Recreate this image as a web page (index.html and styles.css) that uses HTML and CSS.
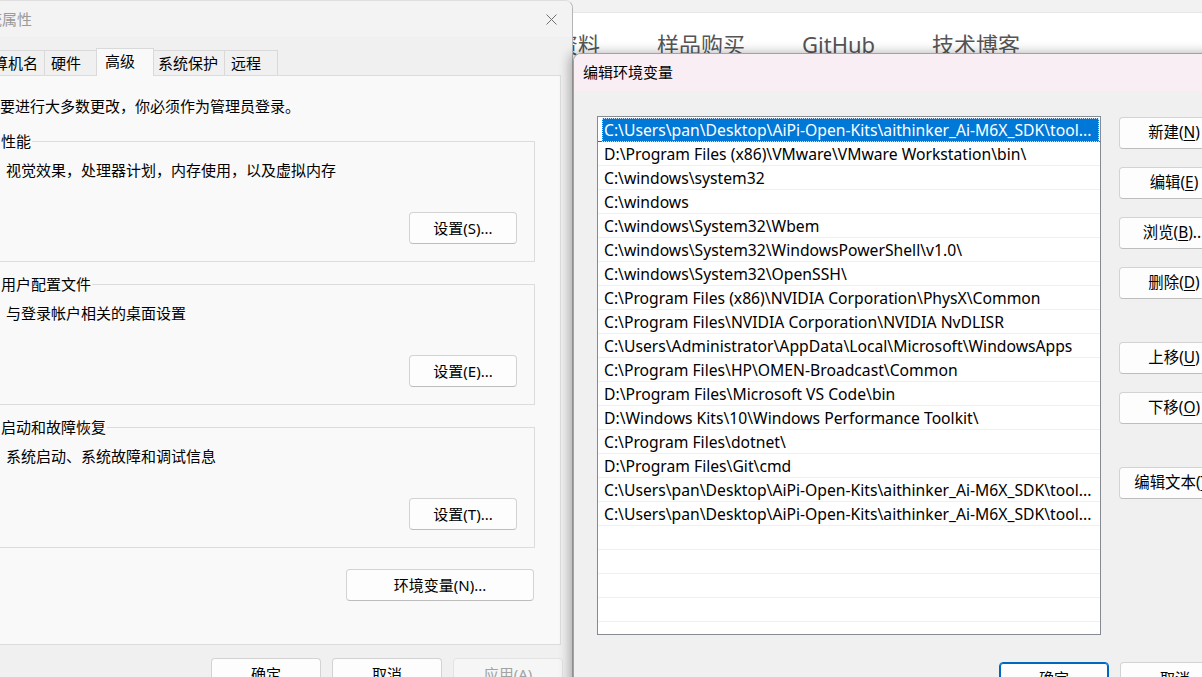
FILE: index.html
```html
<!DOCTYPE html>
<html lang="zh-CN">
  <head>
    <meta charset="UTF-8" />
    <title>编辑环境变量</title>
    <link rel="stylesheet" href="styles.css">
  </head>
  <body>
    <div class="site">
      <div class="site-top"></div>
      <nav class="site-nav">
        <span>资料</span>
        <span>样品购买</span>
        <span>GitHub</span>
        <span>技术博客</span>
      </nav>
    </div>

    <!-- 系统属性 -->
    <div class="window sysprop">
      <div class="titlebar">
        <span class="title">系统属性</span>
        <span class="close">
          <svg width="11" height="11" viewBox="0 0 11 11">
            <path d="M0.5 0.5 L10.5 10.5 M10.5 0.5 L0.5 10.5" stroke="#707070" stroke-width="1" fill="none" />
          </svg>
        </span>
      </div>
      <div class="win-body">
        <div class="tabs">
          <span class="tab">计算机名</span>
          <span class="tab">硬件</span>
          <span class="tab active">高级</span>
          <span class="tab">系统保护</span>
          <span class="tab">远程</span>
        </div>
        <div class="tab-panel">
          <p class="note">要进行大多数更改，你必须作为管理员登录。</p>

          <fieldset class="group">
            <legend>性能</legend>
            <div class="group-body">
              <p class="desc">视觉效果，处理器计划，内存使用，以及虚拟内存</p>
              <button class="btn btn-set">设置(S)...</button>
            </div>
          </fieldset>

          <fieldset class="group">
            <legend>用户配置文件</legend>
            <div class="group-body">
              <p class="desc">与登录帐户相关的桌面设置</p>
              <button class="btn btn-set">设置(E)...</button>
            </div>
          </fieldset>

          <fieldset class="group">
            <legend>启动和故障恢复</legend>
            <div class="group-body">
              <p class="desc">系统启动、系统故障和调试信息</p>
              <button class="btn btn-set">设置(T)...</button>
            </div>
          </fieldset>

          <button class="btn btn-env">环境变量(N)...</button>
        </div>
        <div class="dialog-buttons">
          <button class="btn">确定</button>
          <button class="btn">取消</button>
          <button class="btn disabled">应用(A)</button>
        </div>
      </div>
    </div>

    <!-- 编辑环境变量 -->
    <div class="window envedit">
      <div class="titlebar active-title">
        <span class="title">编辑环境变量</span>
      </div>
      <div class="env-body">
        <div class="env-main">
          <ul class="path-list">
            <li class="selected"><span>C:\Users\pan\Desktop\AiPi-Open-Kits\aithinker_Ai-M6X_SDK\tool...</span></li>
            <li><span>D:\Program Files (x86)\VMware\VMware Workstation\bin\</span></li>
            <li><span>C:\windows\system32</span></li>
            <li><span>C:\windows</span></li>
            <li><span>C:\windows\System32\Wbem</span></li>
            <li><span>C:\windows\System32\WindowsPowerShell\v1.0\</span></li>
            <li><span>C:\windows\System32\OpenSSH\</span></li>
            <li><span>C:\Program Files (x86)\NVIDIA Corporation\PhysX\Common</span></li>
            <li><span>C:\Program Files\NVIDIA Corporation\NVIDIA NvDLISR</span></li>
            <li><span>C:\Users\Administrator\AppData\Local\Microsoft\WindowsApps</span></li>
            <li><span>C:\Program Files\HP\OMEN-Broadcast\Common</span></li>
            <li><span>D:\Program Files\Microsoft VS Code\bin</span></li>
            <li><span>D:\Windows Kits\10\Windows Performance Toolkit\</span></li>
            <li><span>C:\Program Files\dotnet\</span></li>
            <li><span>D:\Program Files\Git\cmd</span></li>
            <li><span>C:\Users\pan\Desktop\AiPi-Open-Kits\aithinker_Ai-M6X_SDK\tool...</span></li>
            <li><span>C:\Users\pan\Desktop\AiPi-Open-Kits\aithinker_Ai-M6X_SDK\tool...</span></li>
            <li><span></span></li>
            <li><span></span></li>
            <li><span></span></li>
            <li><span></span></li>
            <li><span></span></li>
          </ul>
          <div class="side-buttons">
            <button class="btn">新建(<u>N</u>)</button>
            <button class="btn">编辑(<u>E</u>)</button>
            <button class="btn">浏览(<u>B</u>)...</button>
            <button class="btn">删除(<u>D</u>)</button>
            <button class="btn spaced">上移(<u>U</u>)</button>
            <button class="btn">下移(<u>O</u>)</button>
            <button class="btn spaced">编辑文本(<u>T</u>)</button>
          </div>
        </div>
        <div class="dialog-buttons env-buttons">
          <button class="btn default">确定</button>
          <button class="btn">取消</button>
        </div>
      </div>
    </div>
  </body>
</html>
```

FILE: styles.css
```css
* {
  margin: 0;
  padding: 0;
  box-sizing: border-box;
}

body {
  position: relative;
  width: 1202px;
  height: 677px;
  overflow: hidden;
  background: #fff;
  color: #000;
  font-family: "Noto Sans", "Noto Sans CJK SC", sans-serif;
  font-size: 15px;
  line-height: 20px;
}

/* page behind the dialogs */
.site-top {
  height: 13px;
  background: #f2f2f2;
  border-bottom: 1px solid #e6e6e6;
}

.site-nav {
  display: flex;
  gap: 57px;
  padding: 16px 0 0 556px;
  font-size: 22px;
  line-height: 30px;
  color: #555;
}

/* windows */
.window {
  position: absolute;
  background: #f0f0f0;
  overflow: hidden;
}

.titlebar {
  display: flex;
  align-items: center;
  justify-content: space-between;
}

.sysprop {
  left: -40px;
  top: 0;
  width: 613px;
  height: 700px;
  border-radius: 0 8px 0 0;
  border-right: 1px solid #b5b5b5;
  border-top: 1px solid #dedede;
}

.sysprop .titlebar {
  height: 36px;
  padding-left: 12px;
  background: #f3f3f3;
}

.sysprop .title {
  color: #9a9a9a;
}

.close {
  display: flex;
  align-items: center;
  justify-content: center;
  width: 42px;
  height: 36px;
}

.win-body {
  padding: 11px 11px 0;
}

.tabs {
  display: flex;
  align-items: flex-end;
  height: 27px;
}

.tab {
  position: relative;
  min-width: 54px;
  height: 25px;
  padding: 0 6px;
  line-height: 25px;
  border: 1px solid #d9d9d9;
  border-right: none;
  border-bottom: none;
  background: #f0f0f0;
  white-space: nowrap;
}

.tab:last-child {
  border-right: 1px solid #d9d9d9;
}

.tab.active {
  z-index: 1;
  min-width: 58px;
  height: 28px;
  margin: 0 -2px -1px;
  padding: 0 8px 3px;
  line-height: 24px;
  border-right: 1px solid #d9d9d9;
  background: #f9f9f9;
}

.tab.active + .tab {
  border-left: none;
}

.tab-panel {
  display: flex;
  flex-direction: column;
  height: 570px;
  padding: 20px 25px 0 21px;
  background: #f9f9f9;
  border: 1px solid #dcdcdc;
}

.note {
  margin-left: 7px;
  white-space: nowrap;
}

.group {
  margin-top: 12px;
  padding: 0 17px 17px 6px;
  border: 1px solid #dcdcdc;
}

.note + .group {
  margin-top: 15px;
}

.group legend {
  padding: 0 1px;
  line-height: 20px;
}

.group-body {
  display: flex;
  flex-direction: column;
}

.desc {
  margin: 9px 0 0 6px;
  white-space: nowrap;
}

.btn {
  height: 32px;
  width: 110px;
  font-family: inherit;
  font-size: 15px;
  line-height: 30px;
  color: #000;
  background: #fdfdfd;
  border: 1px solid #d3d3d3;
  border-bottom-color: #bdbdbd;
  border-radius: 4px;
  white-space: nowrap;
}

.btn u {
  text-underline-offset: 2px;
}

.btn-set {
  align-self: flex-end;
  width: 108px;
  margin-top: 32px;
}

.btn-env {
  align-self: flex-end;
  width: 188px;
  margin: 21px 1px 0 0;
}

.btn.disabled {
  color: #a3a3a3;
  background: #f6f6f6;
  border-color: #e3e3e3;
}

.dialog-buttons {
  display: flex;
  justify-content: flex-end;
  gap: 11px;
  margin: 13px -2px 0 0;
}

/* edit environment variable */
.envedit {
  left: 573px;
  top: 53px;
  width: 700px;
  height: 700px;
  border: 1px solid #a2a2a2;
  border-radius: 8px 0 0 0;
  box-shadow: -3px 0 12px rgba(0, 0, 0, 0.32);
}

.active-title {
  height: 37px;
  padding: 0 0 1px 9px;
  background: #f9eef3;
}

.env-body {
  width: 656px;
  padding: 25px 0 0 23px;
}

.env-main {
  display: flex;
  align-items: flex-start;
  gap: 18px;
}

.path-list {
  list-style: none;
  flex: none;
  width: 504px;
  height: 519px;
  padding-top: 1px;
  overflow: hidden;
  background: #fff;
  border: 1px solid #868a91;
  font-size: 15.7px;
}

.path-list li {
  height: 24px;
  padding: 0 1px 0 4px;
  border-bottom: 1px solid #f0f0f0;
}

.path-list span {
  display: block;
  height: 23px;
  padding-left: 2px;
  line-height: 24px;
  white-space: nowrap;
  overflow: hidden;
}

.path-list .selected {
  border-bottom-color: #0078d7;
}

.path-list .selected span {
  height: 24px;
  color: #fff;
  background: #0078d7;
  outline: 1px dotted #cfe4f7;
  outline-offset: -1px;
}

.side-buttons {
  display: flex;
  flex-direction: column;
  gap: 18px;
  margin-top: 1px;
}

.side-buttons .btn {
  font-size: 15.4px;
}

.side-buttons .spaced {
  margin-top: 25px;
}

.env-buttons {
  margin: 27px 0 0;
}

.btn.default {
  border-color: #0067c0;
  box-shadow: inset 0 0 0 1px #0067c0;
}
```
